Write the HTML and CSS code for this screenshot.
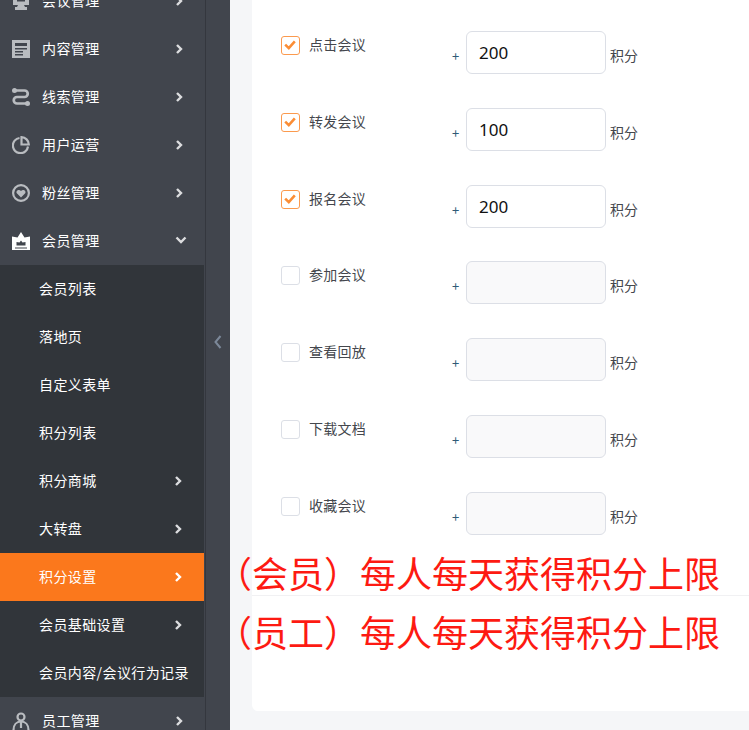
FILE: index.html
```html
<!DOCTYPE html>
<html lang="zh">
<head>
<meta charset="utf-8">
<title>积分设置</title>
<link rel="stylesheet" href="styles.css">
</head>
<body>
<div class="shell">
  <aside class="sidebar">
    <nav class="menu">
      <a class="item"><svg class="icon" viewBox="0 0 18 18"><path class="fill" d="M1 1h16v12h-5l1 2h2v3H3v-3h2l1-2H1z"/><path class="cut" d="M5 4.500h8v5H5z"/></svg><span class="text">会议管理</span><svg class="chev" viewBox="0 0 8 12"><path d="M2 2l4 4-4 4"/></svg></a>
      <a class="item"><svg class="icon" viewBox="0 0 18 18"><path class="fill" d="M0 0h18v18H0z"/><path class="cut" d="M3 3h12v3H3zM3 8h12v1.500H3zM3 11h8v1.500H3zM3 14h8v1.500H3z"/></svg><span class="text">内容管理</span><svg class="chev" viewBox="0 0 8 12"><path d="M2 2l4 4-4 4"/></svg></a>
      <a class="item"><svg class="icon" viewBox="0 0 18 18"><circle class="fill" cx="2.500" cy="2.500" r="2.500"/><circle class="fill" cx="15.500" cy="15.500" r="2.500"/><path class="line heavy" d="M3 2.500h9.500a3.200 3.200 0 0 1 0 6.500H5a3.200 3.200 0 0 0 0 6.500h9"/></svg><span class="text">线索管理</span><svg class="chev" viewBox="0 0 8 12"><path d="M2 2l4 4-4 4"/></svg></a>
      <a class="item"><svg class="icon" viewBox="0 0 18 18"><path class="line" d="M7.500 2a7.600 7.600 0 1 0 8.500 8.500"/><path class="line" d="M9.500 1.200a7.500 7.500 0 0 1 7.300 7.300H9.500z"/></svg><span class="text">用户运营</span><svg class="chev" viewBox="0 0 8 12"><path d="M2 2l4 4-4 4"/></svg></a>
      <a class="item"><svg class="icon" viewBox="0 0 18 18"><circle class="line" cx="9" cy="9" r="7.900"/><path class="fill" d="M9 13.500 4.800 9.200C3.500 7 6.800 4.600 9 6.900c2.200-2.300 5.500.1 4.200 2.300z"/></svg><span class="text">粉丝管理</span><svg class="chev" viewBox="0 0 8 12"><path d="M2 2l4 4-4 4"/></svg></a>
      <a class="item open"><svg class="icon" viewBox="0 0 18 18"><path class="fill" d="M9 0l3.500 5.500L18 4.500V18H0V4.500l5.500 1z"/><path class="cut" d="M9 8.500l1.500 2 3-.5v3.500H4.500V10l3 .5z"/><path class="cut" d="M3 15.500h12v1H3z"/></svg><span class="text">会员管理</span><svg class="chev down" viewBox="0 0 12 8"><path d="M1.500 1.500 6 6l4.500-4.500"/></svg></a>
      <div class="submenu">
        <a class="subitem"><span class="text">会员列表</span></a>
        <a class="subitem"><span class="text">落地页</span></a>
        <a class="subitem"><span class="text">自定义表单</span></a>
        <a class="subitem"><span class="text">积分列表</span></a>
        <a class="subitem"><span class="text">积分商城</span><svg class="chev" viewBox="0 0 8 12"><path d="M2 2l4 4-4 4"/></svg></a>
        <a class="subitem"><span class="text">大转盘</span><svg class="chev" viewBox="0 0 8 12"><path d="M2 2l4 4-4 4"/></svg></a>
        <a class="subitem active"><span class="text">积分设置</span><svg class="chev" viewBox="0 0 8 12"><path d="M2 2l4 4-4 4"/></svg></a>
        <a class="subitem"><span class="text">会员基础设置</span><svg class="chev" viewBox="0 0 8 12"><path d="M2 2l4 4-4 4"/></svg></a>
        <a class="subitem"><span class="text">会员内容/会议行为记录</span></a>
      </div>
      <a class="item"><svg class="icon" viewBox="0 0 18 18"><circle class="line" cx="9" cy="5" r="3.500"/><path class="line" d="M1.500 18c0-5 3-8.500 7.500-8.500s7.500 3.500 7.500 8.500"/><path class="line" d="M9 9.500V16"/></svg><span class="text">员工管理</span><svg class="chev" viewBox="0 0 8 12"><path d="M2 2l4 4-4 4"/></svg></a>
    </nav>
    <div class="rail"><svg class="rail-arrow" viewBox="0 0 8 14"><path d="M6.500 1 1.500 7l5 6"/></svg></div>
  </aside>
  <main class="main">
    <section class="card">
      <div class="rows">
        <div class="row"><span class="check on"><svg viewBox="0 0 20 20"><path d="M4 9.500 8.500 14 16 5.500"/></svg></span><span class="label">点击会议</span><span class="plus">+</span><input class="num" value="200"><span class="unit">积分</span></div>
        <div class="row"><span class="check on"><svg viewBox="0 0 20 20"><path d="M4 9.500 8.500 14 16 5.500"/></svg></span><span class="label">转发会议</span><span class="plus">+</span><input class="num" value="100"><span class="unit">积分</span></div>
        <div class="row"><span class="check on"><svg viewBox="0 0 20 20"><path d="M4 9.500 8.500 14 16 5.500"/></svg></span><span class="label">报名会议</span><span class="plus">+</span><input class="num" value="200"><span class="unit">积分</span></div>
        <div class="row"><span class="check"></span><span class="label">参加会议</span><span class="plus">+</span><input class="num off" disabled><span class="unit">积分</span></div>
        <div class="row"><span class="check"></span><span class="label">查看回放</span><span class="plus">+</span><input class="num off" disabled><span class="unit">积分</span></div>
        <div class="row"><span class="check"></span><span class="label">下载文档</span><span class="plus">+</span><input class="num off" disabled><span class="unit">积分</span></div>
        <div class="row"><span class="check"></span><span class="label">收藏会议</span><span class="plus">+</span><input class="num off" disabled><span class="unit">积分</span></div>
      </div>
      <div class="divider"></div>
    </section>
  </main>
</div>
<div class="note note-member">（会员）每人每天获得积分上限</div>
<div class="note note-staff">（员工）每人每天获得积分上限</div>
</body>
</html>
```

FILE: styles.css
```css
* { box-sizing: border-box; }
html, body { margin: 0; height: 100%; overflow: hidden; }
body {
  position: relative;
  font-family: "Noto Sans CJK SC", "Noto Sans", sans-serif;
  font-size: 14px;
  background: #f5f6f8;
}
.shell { display: flex; height: 730px; overflow: hidden; }

.sidebar { display: flex; flex: none; width: 230px; height: 730px; background: #41454d; overflow: hidden; }
.menu { flex: none; width: 204px; margin-top: -23px; }
.item, .subitem { display: flex; align-items: center; height: 48px; color: #fff; }
.item { padding-left: 12px; }
.subitem { padding-left: 39px; }
.submenu { background: #31353a; }
.subitem.active { background: #fb781c; }
.item .text { margin-left: 12px; }
.text { line-height: 20px; margin-bottom: 2px; letter-spacing: .4px; white-space: nowrap; }
.icon { flex: none; width: 18px; height: 18px; }
.fill { fill: #b9bcc0; }
.cut { fill: #41454d; }
.line { fill: none; stroke: #b9bcc0; stroke-width: 2.200; }
.line.heavy { stroke-width: 2.700; }
.item.open .fill { fill: #fff; }
.chev { width: 8px; height: 12px; margin-left: auto; margin-right: 21px; flex: none; fill: none; stroke: #dcdddf; stroke-width: 2.400; }
.chev.down { width: 12px; height: 8px; margin-right: 17px; margin-bottom: 2px; }
.subitem .chev { margin-right: 22px; }
.subitem.active .chev { stroke: #fff; }

.rail { flex: 1; display: flex; align-items: center; justify-content: center; border-left: 1px solid #34373e; margin-left: 1px; padding-bottom: 46px; }
.rail-arrow { width: 8px; height: 14px; fill: none; stroke: #7c8899; stroke-width: 2; }

.main { flex: 1; min-width: 0; padding: 0 0 19px 22px; }
.card { height: 711px; background: #fff; border-radius: 0 0 0 6px; position: relative; padding: 31px 0 0 29px; }
.rows { display: flex; flex-direction: column; }
.row { display: flex; align-items: flex-start; height: 76.800px; color: #44474d; }
.check { flex: none; width: 19px; height: 19px; margin-top: 5px; border: 1px solid #dcdfe6; border-radius: 3px; background: #fff; }
.check svg { display: block; width: 16px; height: 16px; fill: none; stroke: #fb8d35; stroke-width: 3.200; }
.check.on { border: 1.500px solid #fb9a4e; }
.label { width: 143px; margin-left: 9px; line-height: 20px; margin-top: 3px; letter-spacing: .25px; }
.plus { width: 14px; margin-top: 15px; line-height: 20px; font-size: 13px; color: #2f5a77; }
.num { flex: none; width: 140px; height: 43px; padding: 0 12px 0 12px; border: 1px solid #dcdfe6; border-radius: 6px; background: #fff; font-family: "Noto Sans", sans-serif; font-size: 17px; color: #111; outline: none; }
.num.off { background: #f9f9fa; }
.unit { margin-left: 4px; margin-top: 14px; line-height: 20px; }
.divider { position: absolute; left: 0; right: 0; top: 595px; height: 1px; background: #f1f1f3; }

.note { position: absolute; left: 216px; font-size: 36px; line-height: 48px; color: #fd1a12; white-space: nowrap; }
.note-member { top: 548px; }
.note-staff { top: 607px; }
```
